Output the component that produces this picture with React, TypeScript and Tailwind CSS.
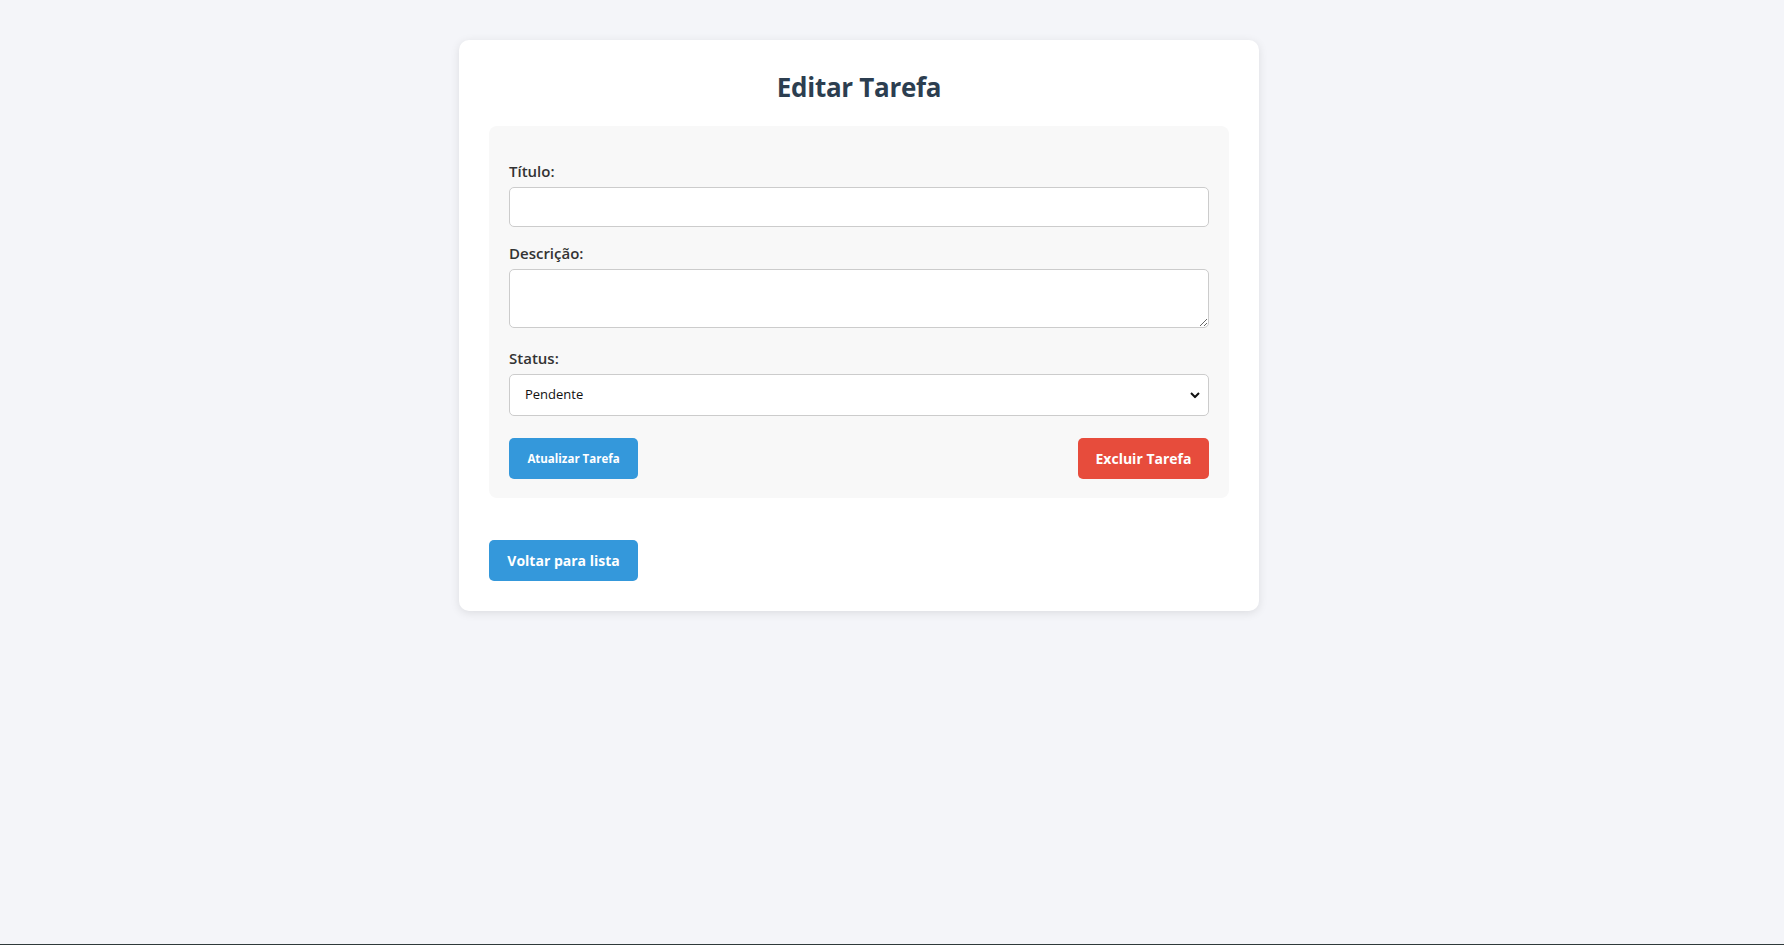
import { useState } from 'react'

export default function App() {
  const [titulo, setTitulo] = useState('')
  const [descricao, setDescricao] = useState('')
  const [status, setStatus] = useState('pendente')

  return (
    <div
      className="h-[945px] bg-[#f4f5f9] border-b border-[#2f3a3a] pt-[40px]"
      style={{ fontFamily: '"Open Sans", "Noto Sans", sans-serif' }}
    >
      {/* Card */}
      <div className="ml-[459px] w-[800px] bg-white rounded-[10px] shadow-[0_2px_10px_rgba(0,0,0,0.1)] px-[30px] pt-[29px] pb-[30px]">
        <h1 className="text-center text-[26px] leading-[37px] font-bold text-[#2c3e50] mb-[20px] tracking-[-0.3px]">
          Editar Tarefa
        </h1>

        {/* Form panel */}
        <form
          className="bg-[#f8f8f8] rounded-[8px] px-[20px] pt-[35px] pb-[19px]"
          onSubmit={(e) => e.preventDefault()}
        >
          <div className="mb-[16px]">
            <label className="block text-[15px] leading-[21px] font-semibold text-[#333] mb-[5px]">Título:</label>
            <input
              type="text"
              value={titulo}
              onChange={(e) => setTitulo(e.target.value)}
              className="block w-full h-[40px] bg-white border border-[#ccc] rounded-[5px] px-[10px] text-[14px] outline-none"
            />
          </div>

          <div className="mb-[20px]">
            <label className="block text-[15px] leading-[21px] font-semibold text-[#333] mb-[5px]">Descrição:</label>
            <textarea
              value={descricao}
              onChange={(e) => setDescricao(e.target.value)}
              className="block w-full h-[59px] bg-white border border-[#ccc] rounded-[5px] px-[10px] py-[6px] text-[14px] outline-none resize-y"
            />
          </div>

          <div className="mb-[22px]">
            <label className="block text-[15px] leading-[21px] font-semibold text-[#333] mb-[5px]">Status:</label>
            <div className="relative">
              <select
                value={status}
                onChange={(e) => setStatus(e.target.value)}
                className="block w-full h-[42px] appearance-none bg-white border border-[#ccc] rounded-[5px] pl-[15px] pr-[30px] text-[13px] text-[#111] outline-none"
              >
                <option value="pendente">Pendente</option>
                <option value="andamento">Em andamento</option>
                <option value="concluida">Concluída</option>
              </select>
              <svg
                className="absolute right-[9px] top-1/2 -translate-y-1/2 pointer-events-none"
                width="10"
                height="7"
                viewBox="0 0 10 7"
              >
                <path d="M1 1.5 L5 5.5 L9 1.5" fill="none" stroke="#111" strokeWidth="2" />
              </svg>
            </div>
          </div>

          <div className="flex justify-between items-center">
            <button
              type="submit"
              className="h-[41px] w-[129px] bg-[#3498db] text-white text-[11.5px] font-bold rounded-[5px]"
            >
              Atualizar Tarefa
            </button>
            <button
              type="button"
              className="h-[41px] w-[131px] bg-[#e74c3c] text-white text-[14px] font-bold rounded-[5px]"
            >
              Excluir Tarefa
            </button>
          </div>
        </form>

        <button
          type="button"
          className="mt-[42px] h-[41px] w-[149px] bg-[#3498db] text-white text-[14px] font-bold rounded-[5px]"
        >
          Voltar para lista
        </button>
      </div>
    </div>
  )
}
